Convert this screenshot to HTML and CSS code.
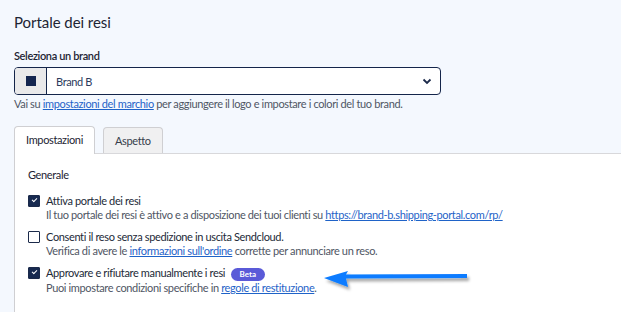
FILE: index.html
```html
<!DOCTYPE html>
<html lang="it">
<head>
  <meta charset="UTF-8">
  <title>Portale dei resi</title>
  <link rel="stylesheet" href="styles.css">
</head>
<body>

  <h1 class="title">Portale dei resi</h1>

  <div class="field">
    <label class="field-label">Seleziona un brand</label>
    <div class="select">
      <div class="select-addon"><span class="swatch"></span></div>
      <div class="select-value">Brand B</div>
      <svg class="chevron" width="10" height="7" viewBox="0 0 10 7">
        <path d="M1.5 1.5 L5 5 L8.5 1.5" fill="none" stroke="#1b2a4a" stroke-width="1.8"/>
      </svg>
    </div>
    <p class="hint">Vai su <a href="#">impostazioni del marchio</a> per aggiungere il logo e impostare i colori del tuo brand.</p>
  </div>

  <div class="tabs">
    <div class="tab active">Impostazioni</div>
    <div class="tab">Aspetto</div>
  </div>

  <div class="panel">
    <h2 class="section">Generale</h2>

    <div class="option">
      <span class="check on"></span>
      <div>
        <div class="option-title">Attiva portale dei resi</div>
        <div class="option-desc">Il tuo portale dei resi è attivo e a disposizione dei tuoi clienti su <a href="#">https://brand-b.shipping-portal.com/rp/</a></div>
      </div>
    </div>

    <div class="option">
      <span class="check"></span>
      <div>
        <div class="option-title">Consenti il reso senza spedizione in uscita Sendcloud.</div>
        <div class="option-desc">Verifica di avere le <a href="#">informazioni sull'ordine</a> corrette per annunciare un reso.</div>
      </div>
    </div>

    <div class="option">
      <span class="check on"></span>
      <div>
        <div class="option-title">Approvare e rifiutare manualmente i resi <span class="badge">Beta</span></div>
        <div class="option-desc">Puoi impostare condizioni specifiche in <a href="#">regole di restituzione</a>.</div>
      </div>
    </div>
  </div>

  <svg class="arrow" width="160" height="30" viewBox="0 0 160 30">
    <defs>
      <filter id="sh" x="-10%" y="-50%" width="120%" height="200%">
        <feDropShadow dx="2" dy="3" stdDeviation="1.5" flood-color="#000" flood-opacity="0.35"/>
      </filter>
    </defs>
    <g filter="url(#sh)">
      <path d="M2 14 L26 7 L24 10.5 L145 10 L145 14 L24 14.5 L26 23 Z" fill="#0a7bff"/>
    </g>
  </svg>

</body>
</html>
```

FILE: styles.css
```css
body {
  margin: 0;
  padding: 0 14px;
  background: #f4f8fe;
  font-family: Lato, "Liberation Sans", sans-serif;
  font-size: 11px;
  letter-spacing: -0.36px;
  color: #1d2433;
  position: relative;
  height: 312px;
  overflow: hidden;
}
a {
  color: #1f63c8;
}
.title {
  font-size: 15px;
  font-weight: 400;
  letter-spacing: -0.05px;
  margin: 0;
  padding-top: 12px;
  line-height: 20px;
}
.field {
  margin-top: 17px;
}
.field-label {
  display: block;
  font-weight: 600;
  line-height: 14px;
}
.select {
  margin-top: 4px;
  width: 427px;
  height: 28px;
  box-sizing: border-box;
  border: 1.5px solid #14254a;
  border-radius: 4px;
  background: #fff;
  display: flex;
  align-items: center;
  overflow: hidden;
}
.select-addon {
  width: 31px;
  height: 100%;
  background: #e9e9ea;
  border-right: 1px solid #14254a;
  display: flex;
  align-items: center;
  justify-content: center;
}
.swatch {
  width: 10px;
  height: 10px;
  background: #13254f;
}
.select-value {
  flex: 1;
  padding-left: 9px;
  color: #2b3a5c;
}
.chevron {
  margin-right: 8px;
}
.hint {
  margin: 2px 0 0;
  line-height: 14px;
  color: #4f5664;
}
.tabs {
  display: flex;
  align-items: flex-end;
  gap: 8px;
  margin-top: 16px;
  position: relative;
  z-index: 1;
}
.tab {
  height: 26px;
  padding: 0 11px;
  box-sizing: border-box;
  border: 1px solid #cfcfd2;
  border-bottom: none;
  border-radius: 4px 4px 0 0;
  background: #f0f0f1;
  line-height: 25px;
  color: #363d4b;
}
.tab.active {
  background: #fff;
  height: 28px;
  margin-top: -1px;
  margin-bottom: -1px;
  color: #1d2433;
}
.panel {
  background: #fff;
  border-top: 1px solid #d8d8db;
  border-left: 1px solid #cfcfd2;
  margin-right: -14px;
  padding: 13px 13px 0;
  height: 200px;
}
.section {
  font-size: 11px;
  font-weight: 400;
  margin: 0 0 11px;
  line-height: 16px;
}
.option {
  display: flex;
  gap: 6px;
  margin-bottom: 8px;
}
.check {
  flex: none;
  width: 12px;
  height: 12px;
  box-sizing: border-box;
  border: 1.5px solid #1b2a4a;
  border-radius: 1px;
  margin-top: 1px;
  position: relative;
}
.check.on {
  background: #172a50;
}
.check.on::after {
  content: "";
  position: absolute;
  left: 2.5px;
  top: 1.5px;
  width: 4px;
  height: 2px;
  border-left: 1.3px solid #fff;
  border-bottom: 1.3px solid #fff;
  transform: rotate(-45deg);
}
.option-title {
  line-height: 14px;
  color: #232a38;
}
.option-desc {
  line-height: 14px;
  color: #4f5664;
}
.badge {
  display: inline-block;
  margin-left: 3px;
  padding: 0 9px;
  border-radius: 7px;
  background: #5a5ad8;
  color: #fff;
  font-size: 8px;
  font-weight: 700;
  letter-spacing: 0;
  line-height: 13px;
}
.arrow {
  position: absolute;
  left: 322px;
  top: 264px;
}
```
